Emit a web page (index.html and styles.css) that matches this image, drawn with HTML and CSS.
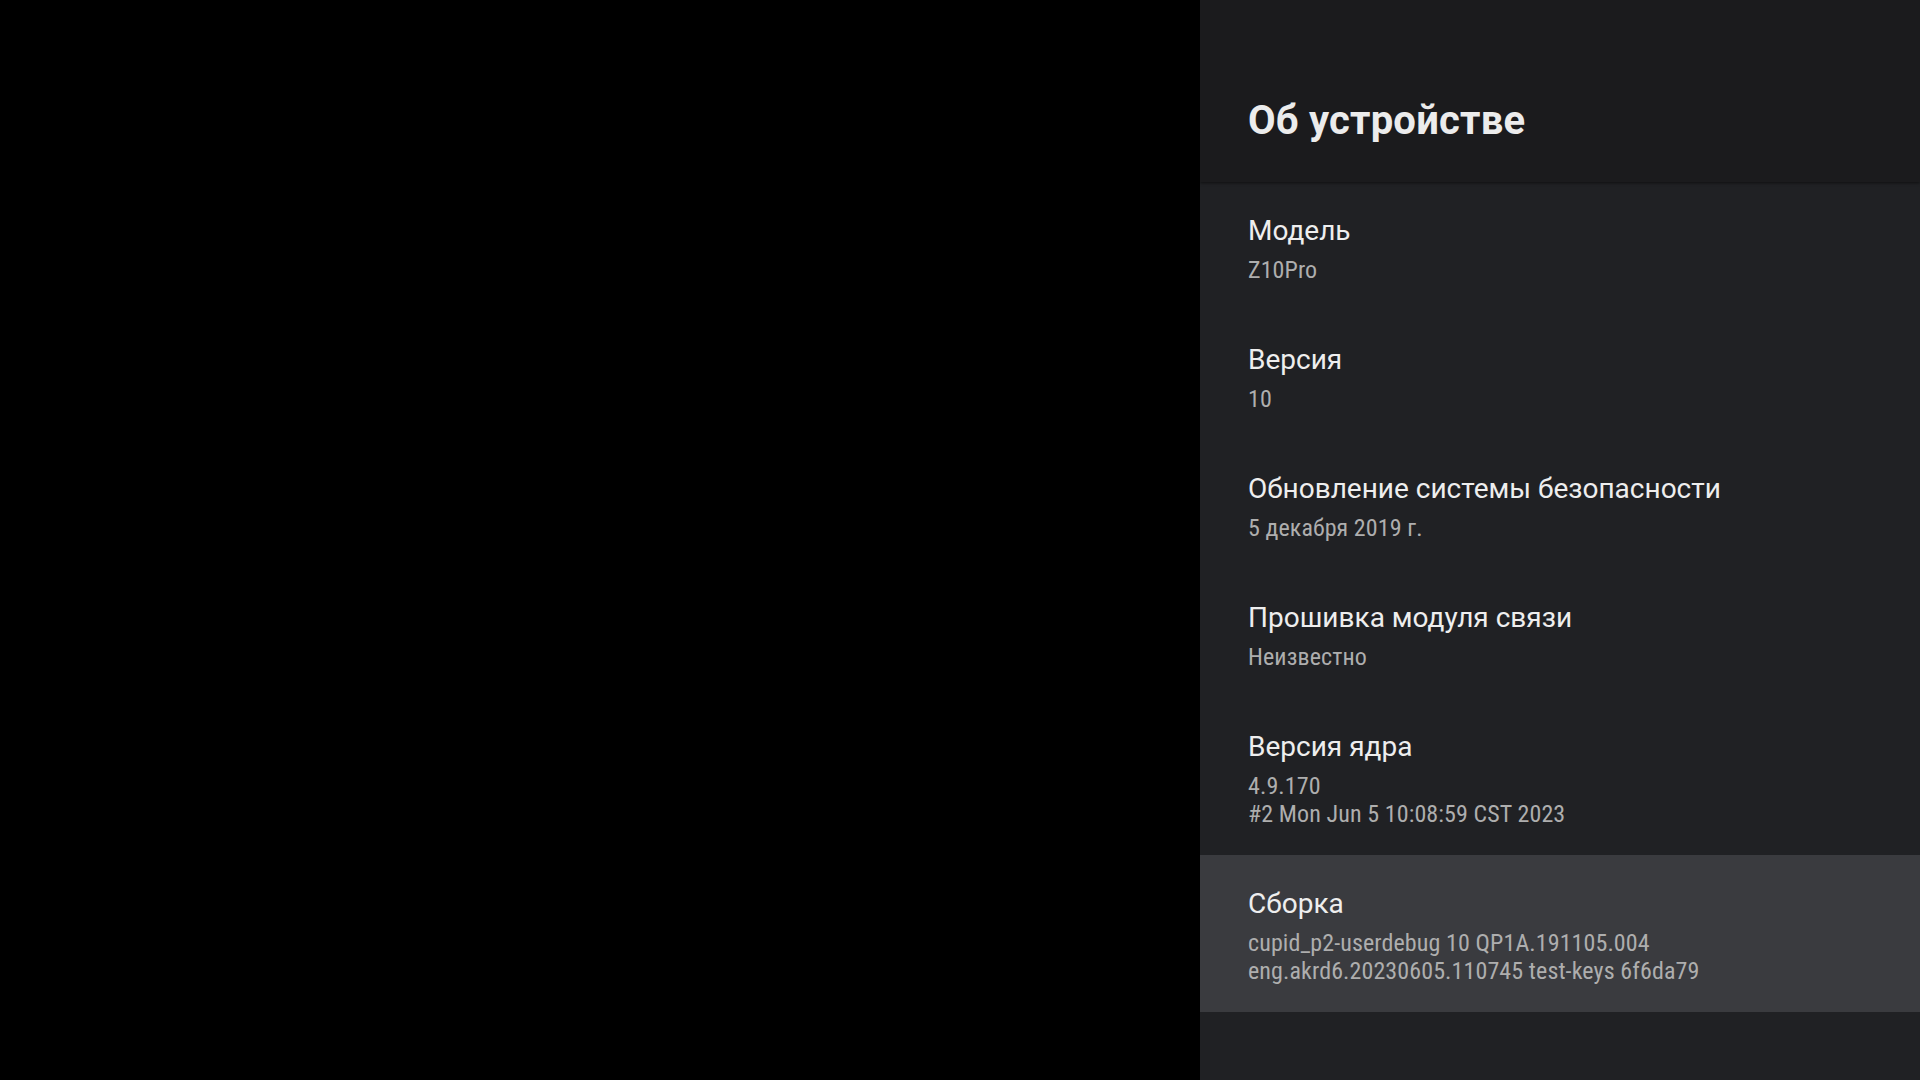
FILE: index.html
```html
<!DOCTYPE html>
<html lang="ru">
<head>
<meta charset="utf-8">
<title>Об устройстве</title>
<link rel="stylesheet" href="styles.css">
</head>
<body>
<div class="screen">
  <div class="backdrop"></div>
  <aside class="panel">
    <header class="panel-header">
      <h1 class="panel-title">Об устройстве</h1>
    </header>
    <ul class="prefs">
      <li class="pref">
        <div class="pref-title">Модель</div>
        <div class="pref-summary">Z10Pro</div>
      </li>
      <li class="pref">
        <div class="pref-title">Версия</div>
        <div class="pref-summary">10</div>
      </li>
      <li class="pref">
        <div class="pref-title">Обновление системы безопасности</div>
        <div class="pref-summary">5 декабря 2019 г.</div>
      </li>
      <li class="pref">
        <div class="pref-title">Прошивка модуля связи</div>
        <div class="pref-summary">Неизвестно</div>
      </li>
      <li class="pref">
        <div class="pref-title">Версия ядра</div>
        <div class="pref-summary">4.9.170<br>#2 Mon Jun 5 10:08:59 CST 2023</div>
      </li>
      <li class="pref pref-focused">
        <div class="pref-title">Сборка</div>
        <div class="pref-summary">cupid_p2-userdebug 10 QP1A.191105.004<br>eng.akrd6.20230605.110745 test-keys 6f6da79</div>
      </li>
    </ul>
  </aside>
</div>
</body>
</html>
```

FILE: styles.css
```css
html, body {
  margin: 0;
  padding: 0;
  height: 100%;
  background: #000;
}

body {
  font-family: Roboto, "Noto Sans", sans-serif;
  -webkit-font-smoothing: antialiased;
}

.screen {
  display: flex;
  width: 1920px;
  height: 1080px;
  overflow: hidden;
}

.backdrop {
  flex: 0 0 1200px;
  background: #000;
}

.panel {
  flex: 0 0 720px;
  display: flex;
  flex-direction: column;
  background: #202124;
}

.panel-header {
  height: 182px;
  flex: 0 0 182px;
  box-sizing: border-box;
  padding: 0 48px;
  background: #1b1b1d;
  display: flex;
  align-items: flex-start;
  position: relative;
  z-index: 1;
  box-shadow: 0 1px 3px rgba(0, 0, 0, 0.55);
}

.panel-title {
  margin: 0;
  padding-top: 97px;
  font-family: Roboto, sans-serif;
  font-weight: 700;
  font-size: 40px;
  line-height: 48px;
  letter-spacing: 0.2px;
  color: #ececec;
}

.prefs {
  list-style: none;
  margin: 0;
  padding: 0;
}

.pref {
  padding: 27px 48px 27px;
}

.pref-focused {
  background: #3a3b3f;
}

.pref-title {
  font-family: Roboto, sans-serif;
  font-size: 28px;
  line-height: 44px;
  color: #eeeeee;
}

.pref-summary {
  margin-top: 3px;
  font-family: "Roboto Condensed", Roboto, sans-serif;
  font-size: 24px;
  line-height: 28px;
  letter-spacing: 0.1px;
  color: #aeaeae;
}
```
